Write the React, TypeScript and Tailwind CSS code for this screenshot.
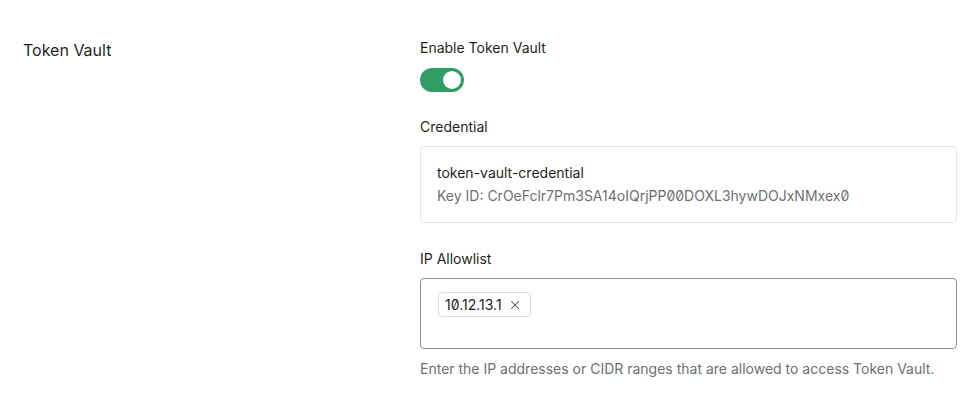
import { X } from 'lucide-react';

const font = "[font-family:Inter,'Noto_Sans',sans-serif] [font-feature-settings:'zero']";

const Toggle = ({ on }: { on: boolean }) => (
  <button
    type="button"
    role="switch"
    aria-checked={on}
    className={`flex h-6 w-11 items-center rounded-full p-[3px] ${on ? 'justify-end bg-[#2f9e64]' : 'justify-start bg-[#d4d4d4]'}`}
  >
    <span className="block h-[18px] w-[18px] rounded-full bg-white" />
  </button>
);

const TokenVaultSettings = () => {
  const ips = ['10.12.13.1'];

  return (
    <div className={`${font} flex bg-white text-[#1f1f1f] pt-[38px]`}>
      {/* section title */}
      <div className="w-[420px] shrink-0 pl-[23px]">
        <h2 className="text-base leading-6">Token Vault</h2>
      </div>

      <div className="flex-1 pr-[23px]">
        <div className="text-sm leading-5">Enable Token Vault</div>
        <div className="mt-2.5">
          <Toggle on />
        </div>

        <div className="mt-[25px] text-sm leading-5">Credential</div>
        <div className="mt-[9px] rounded border border-[#e6e6e6] px-4 py-4">
          <div className="text-sm leading-5">token-vault-credential</div>
          <div className="mt-[3px] text-sm leading-5 text-[#6f6f6f]">
            Key ID: CrOeFclr7Pm3SA14oIQrjPP00DOXL3hywDOJxNMxex0
          </div>
        </div>

        <div className="mt-[26px] text-sm leading-5">IP Allowlist</div>
        <div className="mt-[9px] h-[71px] rounded border border-[#8f8f8f] px-[17px] pt-[13px]">
          <div className="flex flex-wrap gap-2">
            {ips.map((ip) => (
              <span
                key={ip}
                className="flex h-[25px] items-center gap-1.5 rounded border border-[#dcdcdc] pl-1.5 pr-2 text-sm"
              >
                {ip}
                <X className="h-3.5 w-3.5 text-[#555]" strokeWidth={1.75} />
              </span>
            ))}
          </div>
        </div>
        <p className="mt-2.5 text-sm leading-5 text-[#6f6f6f]">
          Enter the IP addresses or CIDR ranges that are allowed to access Token Vault.
        </p>
      </div>
    </div>
  );
};

export default function App() {
  return (
    <div className="h-[416px] w-[980px] bg-white">
      <TokenVaultSettings />
    </div>
  );
}
